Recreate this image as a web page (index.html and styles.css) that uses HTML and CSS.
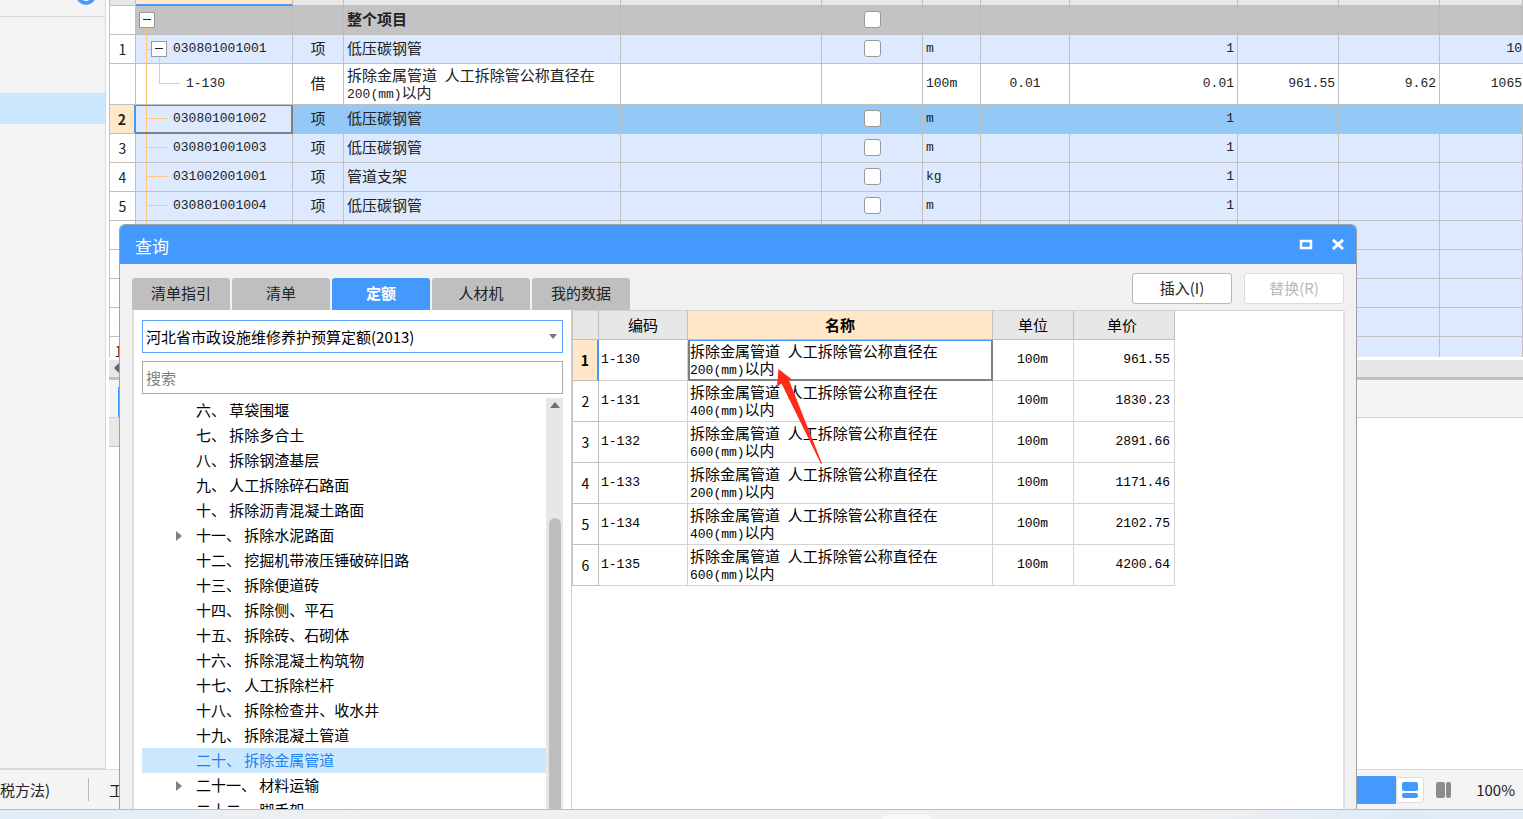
FILE: index.html
```html
<!DOCTYPE html>
<html lang="zh-CN">
<head>
<meta charset="utf-8">
<title>查询</title>
<link rel="stylesheet" href="styles.css">
</head>
<body>
<div class="app">
  <div class="workspace">
    <aside class="sidebar">
      <div class="sidebar-head"><span class="badge"></span></div>
      <div class="sidebar-selected"></div>
    </aside>
    <main class="main">
      <div class="grid-pane">
        <table class="bill">
          <colgroup><col class="c-idx"><col class="c-code"><col class="c-kind"><col class="c-name"><col class="c-feat"><col class="c-lock"><col class="c-unit"><col class="c-content"><col class="c-qty"><col class="c-price"><col class="c-price"><col></colgroup>
          <thead><tr><th></th><th class="current"></th><th></th><th></th><th></th><th></th><th></th><th></th><th></th><th></th><th></th><th></th></tr></thead>
          <tbody>
            <tr class="total"><th></th><td class="t-root"><button class="toggle" aria-label="折叠"></button></td><td></td><td class="bold">整个项目</td><td></td><td class="mid"><input type="checkbox" aria-label="锁定"></td><td></td><td></td><td></td><td></td><td></td><td></td></tr>
            <tr><th>1</th><td class="t-parent"><div class="node"><button class="toggle" aria-label="折叠"></button><span class="n">030801001001</span></div></td><td class="mid">项</td><td>低压碳钢管</td><td></td><td class="mid"><input type="checkbox" aria-label="锁定"></td><td class="n">m</td><td></td><td class="n num">1</td><td></td><td></td><td class="n cut">10</td></tr>
            <tr class="sub"><th></th><td class="t-child n">1-130</td><td class="mid">借</td><td>拆除金属管道<span class="n"> </span>人工拆除管公称直径在<br><span class="n">200(mm)</span>以内</td><td></td><td></td><td class="n">100m</td><td class="n mid">0.01</td><td class="n num">0.01</td><td class="n num">961.55</td><td class="n num">9.62</td><td class="n cut">1065</td></tr>
            <tr class="selected"><th>2</th><td class="t-leaf focus n">030801001002</td><td class="mid">项</td><td>低压碳钢管</td><td></td><td class="mid"><input type="checkbox" aria-label="锁定"></td><td class="n">m</td><td></td><td class="n num">1</td><td></td><td></td><td></td></tr>
            <tr><th>3</th><td class="t-leaf n">030801001003</td><td class="mid">项</td><td>低压碳钢管</td><td></td><td class="mid"><input type="checkbox" aria-label="锁定"></td><td class="n">m</td><td></td><td class="n num">1</td><td></td><td></td><td></td></tr>
            <tr><th>4</th><td class="t-leaf n">031002001001</td><td class="mid">项</td><td>管道支架</td><td></td><td class="mid"><input type="checkbox" aria-label="锁定"></td><td class="n">kg</td><td></td><td class="n num">1</td><td></td><td></td><td></td></tr>
            <tr><th>5</th><td class="t-leaf n">030801001004</td><td class="mid">项</td><td>低压碳钢管</td><td></td><td class="mid"><input type="checkbox" aria-label="锁定"></td><td class="n">m</td><td></td><td class="n num">1</td><td></td><td></td><td></td></tr>
            <tr><th>6</th><td class="t-leaf"></td><td></td><td></td><td></td><td></td><td></td><td></td><td></td><td></td><td></td><td></td></tr>
            <tr><th></th><td class="t-leaf"></td><td></td><td></td><td></td><td></td><td></td><td></td><td></td><td></td><td></td><td></td></tr>
            <tr><th>8</th><td class="t-leaf"></td><td></td><td></td><td></td><td></td><td></td><td></td><td></td><td></td><td></td><td></td></tr>
            <tr><th>9</th><td class="t-leaf"></td><td></td><td></td><td></td><td></td><td></td><td></td><td></td><td></td><td></td><td></td></tr>
            <tr><th>10</th><td class="t-leaf"></td><td></td><td></td><td></td><td></td><td></td><td></td><td></td><td></td><td></td><td></td></tr>
          </tbody>
        </table>
      </div>
      <div class="hscroll"><svg width="10" height="16" viewBox="0 0 10 16"><path d="M10 3v10L5 8z" fill="#666"/></svg></div>
      <div class="subtabs"><span></span></div>
      <div class="subhead"></div>
      <div class="detail"></div>
    </main>
  </div>
  <footer class="status">
    <span class="method">税方法)</span><span class="divider"></span><span>工</span>
    <div class="view">
      <span class="view-block"></span>
      <button class="view-btn on" aria-label="上下布局"><svg width="16" height="16" viewBox="0 0 16 16"><rect width="16" height="9" rx="2" fill="#49f"/><rect y="11" width="16" height="5" rx="2" fill="#49f"/></svg></button>
      <button class="view-btn" aria-label="左右布局"><svg width="16" height="16" viewBox="0 0 16 16"><rect width="9" height="16" rx="2" fill="#8c8c8c"/><rect x="10" width="5" height="16" rx="2" fill="#8c8c8c"/></svg></button>
      <span class="zoom">100%</span>
    </div>
  </footer>

  <section class="dialog" role="dialog" aria-labelledby="dlg-title">
    <header class="titlebar">
      <h1 id="dlg-title">查询</h1>
      <button class="win" aria-label="最大化"><svg width="14" height="12" viewBox="0 0 14 12"><rect x="2" y="2" width="10" height="7" fill="none" stroke="#fff" stroke-width="2.500"/></svg></button>
      <button class="win" aria-label="关闭"><svg width="14" height="12" viewBox="0 0 14 12"><path d="M2 1l10 9M12 1L2 10" stroke="#fff" stroke-width="3"/></svg></button>
    </header>
    <div class="toolbar">
      <nav class="tabs">
        <button>清单指引</button><button>清单</button><button class="active">定额</button><button>人材机</button><button>我的数据</button>
      </nav>
      <div class="actions"><button>插入(I)</button><button disabled>替换(R)</button></div>
    </div>
    <div class="panel">
      <div class="left">
        <div class="combo">
          <select aria-label="定额库"><option>河北省市政设施维修养护预算定额(2013)</option></select>
          <svg width="8" height="5" viewBox="0 0 8 5"><path d="M0 0h8L4 5z" fill="#777"/></svg>
        </div>
        <input class="search" type="text" placeholder="搜索" aria-label="搜索">
        <div class="tree-wrap">
          <ul class="tree">
            <li>六、 草袋围堰</li>
            <li>七、 拆除多合土</li>
            <li>八、 拆除钢渣基层</li>
            <li>九、 人工拆除碎石路面</li>
            <li>十、 拆除沥青混凝土路面</li>
            <li class="closed">十一、 拆除水泥路面</li>
            <li>十二、 挖掘机带液压锤破碎旧路</li>
            <li>十三、 拆除便道砖</li>
            <li>十四、 拆除侧、平石</li>
            <li>十五、 拆除砖、石砌体</li>
            <li>十六、 拆除混凝土构筑物</li>
            <li>十七、 人工拆除栏杆</li>
            <li>十八、 拆除检查井、收水井</li>
            <li>十九、 拆除混凝土管道</li>
            <li class="picked">二十、 拆除金属管道</li>
            <li class="closed">二十一、 材料运输</li>
            <li>二十二、 脚手架</li>
          </ul>
          <div class="vscroll"><svg width="10" height="6" viewBox="0 0 10 6"><path d="M0 6h10L5 0z" fill="#707070"/></svg><span class="thumb"></span></div>
        </div>
      </div>
      <div class="right">
        <table class="quota">
          <colgroup><col class="q-idx"><col class="q-code"><col class="q-name"><col class="q-unit"><col class="q-price"></colgroup>
          <thead><tr><th></th><th>编码</th><th class="current">名称</th><th>单位</th><th class="price-h">单价</th></tr></thead>
          <tbody>
            <tr class="selected"><th>1</th><td class="n">1-130</td><td class="focus">拆除金属管道<span class="n"> </span>人工拆除管公称直径在<br><span class="n">200(mm)</span>以内</td><td class="n mid">100m</td><td class="n num">961.55</td></tr>
            <tr><th>2</th><td class="n">1-131</td><td>拆除金属管道<span class="n"> </span>人工拆除管公称直径在<br><span class="n">400(mm)</span>以内</td><td class="n mid">100m</td><td class="n num">1830.23</td></tr>
            <tr><th>3</th><td class="n">1-132</td><td>拆除金属管道<span class="n"> </span>人工拆除管公称直径在<br><span class="n">600(mm)</span>以内</td><td class="n mid">100m</td><td class="n num">2891.66</td></tr>
            <tr><th>4</th><td class="n">1-133</td><td>拆除金属管道<span class="n"> </span>人工拆除管公称直径在<br><span class="n">200(mm)</span>以内</td><td class="n mid">100m</td><td class="n num">1171.46</td></tr>
            <tr><th>5</th><td class="n">1-134</td><td>拆除金属管道<span class="n"> </span>人工拆除管公称直径在<br><span class="n">400(mm)</span>以内</td><td class="n mid">100m</td><td class="n num">2102.75</td></tr>
            <tr><th>6</th><td class="n">1-135</td><td>拆除金属管道<span class="n"> </span>人工拆除管公称直径在<br><span class="n">600(mm)</span>以内</td><td class="n mid">100m</td><td class="n num">4200.64</td></tr>
          </tbody>
        </table>
        <svg class="arrow" width="46" height="96" viewBox="0 0 46 96"><path d="M1.500 0L15 10.500l-3 .8 33 83.200-1 .5L4.500 14.500l-4.500 3.500z" fill="#ff2a1a"/></svg>
      </div>
    </div>
  </section>
</div>
<div class="taskbar"><span></span></div>
</body>
</html>
```
FILE: styles.css
```css
* { box-sizing: border-box; }
html, body { height: 100%; }
body {
  margin: 0;
  display: flex;
  flex-direction: column;
  overflow: hidden;
  background: #fff;
  color: #222;
  font: 15px/20px "Noto Sans CJK SC", sans-serif;
}
button, input, select { font: inherit; color: inherit; margin: 0; }
button { padding: 0; border: 0; background: none; }

.app { position: relative; flex: 1; min-height: 0; display: flex; flex-direction: column; overflow: hidden; }
.workspace { flex: 1; min-height: 0; display: flex; }

.sidebar { width: 106px; background: #f4f4f4; border-right: 1px solid #d8d8d8; border-bottom: 1px solid #d8d8d8; }
.sidebar-head { height: 17px; border-bottom: 1px solid #d8d8d8; display: flex; justify-content: flex-end; padding-right: 9px; }
.badge { width: 20px; height: 20px; margin-top: -15px; border-radius: 50%; border: 4px solid #49f; background: #fff; }
.sidebar-selected { margin-top: 76px; height: 31px; background: #cce8ff; }

.main { flex: 1; min-width: 0; display: flex; flex-direction: column; padding-left: 3px; }
.grid-pane { height: 357px; overflow: hidden; }

table { border-collapse: separate; border-spacing: 0; table-layout: fixed; }
th, td { padding: 0 3px 3px; border-right: 1px solid #c0c0c0; border-bottom: 1px solid #c0c0c0; text-align: left; font-weight: 400; line-height: 17px; white-space: nowrap; overflow: hidden; }
th { text-align: center; font-size: 14px; padding: 0; }
.n { font-family: "Liberation Mono", monospace; font-size: 13px; white-space: pre; }
td.n { padding-bottom: 1px; }
span.n { line-height: 0; }
.mid { text-align: center; }
.num { text-align: right; }
.bold { font-weight: 700; }

.bill { width: 100%; border-left: 1px solid #c0c0c0; }
.bill thead th { height: 6px; padding: 0; background: #e7e7e7; }
.bill thead .current { background: #ffe7c7; border-bottom: 2px solid #49f; }
.bill tbody tr { height: 29px; background: #dde9fe; }
.bill tbody th { background: #fff; }
.bill tbody .total { background: #c3c3c3; }
.total td { border-color: #bdbdbd; }
.bill tbody .sub { height: 41px; background: #fff; }
.bill tbody .selected { background: #93c8f7; }
.bill .cut { text-align: right; padding-right: 1px; border-right: 0; }
.c-idx { width: 26px; }
.c-code { width: 157px; }
.c-kind { width: 51px; }
.c-name { width: 277px; }
.c-feat { width: 201px; }
.c-lock { width: 101px; }
.c-unit { width: 58px; }
.c-content { width: 89px; }
.c-qty { width: 168px; }
.c-price { width: 101px; }

.selected th, .bill tbody .selected th { background: #ffe7c7; font-weight: 700; border-right: 2px solid #49f; }

.toggle { flex: none; display: block; width: 16px; height: 16px; border: 1px solid #999; background: linear-gradient(#222, #222) center / 8px 1px no-repeat #fff; }
.node { display: flex; align-items: center; gap: 6px; }
.t-root { padding-bottom: 1px; background: linear-gradient(#ffc67c, #ffc67c) 10px 22px / 1px 100% no-repeat; }
.t-parent { padding-bottom: 1px; padding-left: 15px; background: linear-gradient(#ffc67c, #ffc67c) 10px 0 / 1px 100% no-repeat, linear-gradient(#ffc67c, #ffc67c) 10px 14px / 6px 1px no-repeat, linear-gradient(#ffc67c, #ffc67c) 23px 20px / 1px 10px no-repeat; }
.t-child { padding-left: 50px; background: linear-gradient(#ffc67c, #ffc67c) 10px 0 / 1px 100% no-repeat, linear-gradient(#ffc67c, #ffc67c) 23px 0 / 1px 20px no-repeat, linear-gradient(#ffc67c, #ffc67c) 23px 19px / 21px 1px no-repeat; }
.t-leaf { padding-left: 37px; background: linear-gradient(#ffc67c, #ffc67c) 10px 0 / 1px 100% no-repeat, linear-gradient(#ffc67c, #ffc67c) 10px 13px / 21px 1px no-repeat; }
.bill .focus { background-color: #dde9fe; box-shadow: inset 0 1px #808080, inset -1px -1px #808080; border-color: #808080; }

input[type="checkbox"] { appearance: none; display: block; width: 17px; height: 17px; margin: 2px auto 0; border: 1px solid #999; border-radius: 3px; background: #fff; }

.hscroll { height: 20px; margin-top: 3px; background: #e7e7e7; border-bottom: 3px solid #c0c0c0; }
.hscroll svg { display: block; }
.subtabs { height: 38px; padding: 7px 0 0 9px; background: #f4f4f4; border-bottom: 1px solid #d0d0d0; }
.subtabs span { display: block; width: 1px; height: 30px; background: #49f; }
.subhead { width: 60px; height: 29px; background: #e7e7e7; border-bottom: 1px solid #c0c0c0; }
.detail { flex: 1; }

.status { height: 40px; flex: none; display: flex; align-items: center; background: #f4f4f4; border-top: 1px solid #d8d8d8; padding-right: 8px; }
.divider { width: 1px; height: 23px; margin: 0 20px 0 38px; background: #b5bbc2; }
.view { margin-left: auto; display: flex; align-items: center; }
.view-block { width: 80px; height: 28px; background: #49f; }
.view-btn { width: 28px; height: 26px; display: grid; place-items: center; border-radius: 3px; }
.view-btn.on { background: #fff; border: 1px solid #ddd; }
.view-btn:not(.on) { margin-left: 6px; }
.zoom { margin-left: 18px; }

.taskbar { flex: none; height: 10px; display: flex; justify-content: center; padding: 5px 0 0 290px; border-top: 1px solid #b8bcc4; background: linear-gradient(90deg, #e0edf8, #f0f0f0 25%, #f0f0f0 78%, #deebf8 92%, #e4edf6); overflow: hidden; }
.taskbar span { width: 48px; height: 10px; border-radius: 4px; background: #f9f9f9; }

.dialog { position: absolute; left: 119px; right: 166px; top: 224px; bottom: 0; display: flex; flex-direction: column; background: #f1f1f1; border: 1px solid #a0a0a0; border-bottom: 0; border-radius: 6px 6px 0 0; overflow: hidden; }
.titlebar { height: 39px; flex: none; display: flex; align-items: center; gap: 18px; padding: 0 11px 0 15px; background: #49f; color: #fff; }
.titlebar h1 { flex: 1; margin: 0; padding-top: 2px; font-size: 17px; line-height: 24px; font-weight: 400; }
.win { display: grid; }
.toolbar { flex: none; height: 46px; display: flex; justify-content: space-between; align-items: flex-end; padding: 0 12px; }
.tabs { display: flex; gap: 2px; }
.tabs button { width: 98px; height: 32px; padding-bottom: 2px; border-radius: 3px 3px 0 0; background: #bfbfbf; }
.tabs .active { background: #49f; color: #fff; font-weight: 700; }
.actions { align-self: flex-start; display: flex; gap: 12px; padding-top: 9px; }
.actions button { width: 100px; height: 31px; padding-bottom: 2px; border: 1px solid #b8b8b8; border-radius: 3px; background: #fff; }
.actions button:disabled { border-color: #dcdcdc; color: #b8b8b8; }

.panel { flex: 1; min-height: 0; margin: 0 11px 0 12px; display: flex; background: #fff; border: solid #e0e0e0; border-width: 0 2px; }
.left { width: 437px; flex: none; display: flex; flex-direction: column; padding: 10px 8px 0; color: #000; }
.combo { position: relative; margin-bottom: 8px; }
.combo select { display: block; width: 421px; height: 33px; padding: 0 20px 0 3px; appearance: none; border: 1px solid #5aa2fb; border-radius: 0; background: #fff; color: #000; }
.combo svg { position: absolute; right: 6px; top: 14px; pointer-events: none; }
.search { width: 421px; height: 33px; padding: 0 3px; border: 1px solid #aaa; outline: 0; }
.search::placeholder { color: #808080; }
.tree-wrap { flex: 1; min-height: 0; display: flex; margin-top: 4px; overflow: hidden; }
.tree { flex: 1; margin: 0; padding: 0; list-style: none; }
.tree li { height: 25px; line-height: 23px; padding-left: 54px; white-space: nowrap; }
.tree .picked { background: #cce8ff; color: #1e80f0; }
.tree .closed { padding-left: 34px; }
.tree .closed::before { content: ""; display: inline-block; margin-right: 14px; border: 5px solid transparent; border-left: 6px solid #808080; border-right: 0; }
.vscroll { width: 17px; background: #e7e7e7; display: flex; flex-direction: column; align-items: center; padding-top: 4px; gap: 110px; }
.vscroll svg { flex: none; }
.thumb { flex: 1; width: 12px; border-radius: 6px 6px 0 0; background: #bebebe; }

.right { position: relative; flex: 1; border-left: 1px solid #d0d0d0; border-top: 1px solid #d0d0d0; }
.quota { width: 602px; border-left: 1px solid #c0c0c0; color: #000; }
.quota thead th { height: 29px; padding: 0 0 2px; background: #e7e7e7; font-size: 15px; }
.quota thead .current { background: #ffe7c7; font-weight: 700; }
.quota thead .price-h { padding-right: 4px; }
.quota tbody tr { height: 41px; }
.quota td { border-color: #d4d4d4; padding-left: 2px; }
.quota .focus { border: 2px solid #808080; border-top: 1px solid #49f; padding: 0 0 2px; }
.quota .num { padding-right: 4px; }
.q-idx { width: 26px; }
.q-code { width: 89px; }
.q-name { width: 305px; }
.q-unit { width: 81px; }
.q-price { width: 101px; }
.arrow { position: absolute; left: 205px; top: 58px; }
```
